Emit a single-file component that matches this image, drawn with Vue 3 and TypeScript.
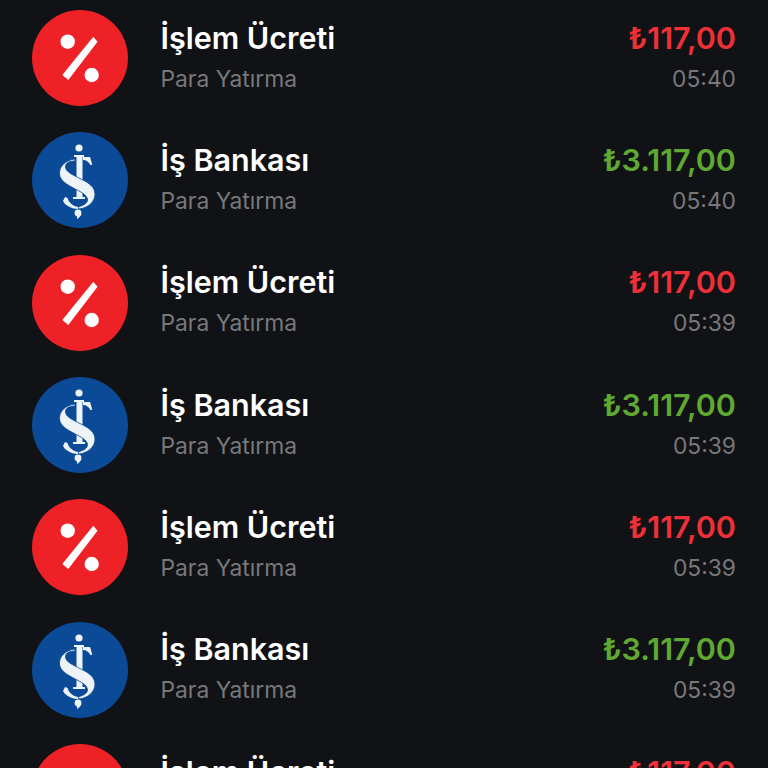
<template>
  <div class="screen">
    <div class="list">
      <div v-for="(tx, i) in transactions" :key="i" class="row">
        <div class="avatar" :class="tx.kind">
          <svg v-if="tx.kind === 'fee'" viewBox="0 0 96 96" class="icon">
            <circle cx="35.7" cy="31.7" r="7.2" fill="#fff" />
            <circle cx="59.7" cy="65" r="7.2" fill="#fff" />
            <path d="M61.3 26.7 L65.5 31.7 L36.3 70 L30.3 65 Z" fill="#fff" />
          </svg>
          <svg v-else viewBox="0 0 96 96" class="icon">
            <g fill="#eef3f8">
              <circle cx="47" cy="16" r="3.6" />
              <path d="M42 23 H52 V25 H50.5 V65 H53 V67 H41 V65 H44.5 V25 H42 Z" />
              <path d="M51 25 H58 C59 28 60 31 60 33 H58.4 C57 30 54.5 28 51 28 Z" />
              <path d="M43 27 C34 28 27 34 27.5 42 C28 50 38 54 47 59 C53 62 57 66 55 70 C53 73 49 74 46 75 L47 77 C56 76 63 70 63 62 C63 52 50 48 43 44 C37 41 33 38 33.5 34 C34 30 39 29 43 29 Z" stroke="#0b4a96" stroke-width="0.8" />
              <path d="M33 65 L35.5 66 C37 71 41 74 46 75 L46 77 C40 77 36 74 33 72 L31 69 Z" />
              <circle cx="46" cy="81" r="3.4" />
              <path d="M45 82 L49.4 81.5 C49 84 47 86 45 87 Z" />
            </g>
          </svg>
        </div>
        <div class="info">
          <div class="title">{{ tx.title }}</div>
          <div class="sub">Para Yatırma</div>
        </div>
        <div class="side">
          <div class="amount" :class="tx.kind">{{ tx.amount }}</div>
          <div class="time">{{ tx.time }}</div>
        </div>
      </div>
    </div>
  </div>
</template>

<script setup lang="ts">
interface Tx {
  kind: 'fee' | 'bank'
  title: string
  amount: string
  time: string
}

const fee = (time: string): Tx => ({ kind: 'fee', title: 'İşlem Ücreti', amount: '₺117,00', time })
const bank = (time: string): Tx => ({ kind: 'bank', title: 'İş Bankası', amount: '₺3.117,00', time })

const transactions: Tx[] = [
  fee('05:40'),
  bank('05:40'),
  fee('05:39'),
  bank('05:39'),
  fee('05:39'),
  bank('05:39'),
  fee('05:39'),
]
</script>

<style>
html, body { background: #111215; }
</style>

<style scoped>
.screen { width: 768px; height: 768px; overflow: hidden; background: #111215; font-family: Inter, "Liberation Sans", sans-serif; }
.list { display: flex; flex-direction: column; margin-top: -3px; padding: 0 32px; }
.row { display: flex; align-items: center; height: 122.33px; flex-shrink: 0; }
.avatar { width: 96px; height: 96px; border-radius: 50%; flex-shrink: 0; margin-right: 32.5px; }
.avatar.fee { background: #ee2127; }
.avatar.bank { background: #0b4a96; }
.icon { display: block; width: 96px; height: 96px; }
.info { flex: 1; display: flex; flex-direction: column; gap: 9px; padding-bottom: 4px; }
.title { font-size: 30.5px; line-height: 36px; font-weight: 600; color: #fff; }
.sub { font-size: 22.8px; line-height: 28px; color: #77787c; }
.side { display: flex; flex-direction: column; align-items: flex-end; gap: 9px; padding-bottom: 4px; }
.amount { font-size: 30.5px; line-height: 36px; font-weight: 600; }
.amount.fee { color: #ee3038; }
.amount.bank { color: #5fa831; }
.time { font-size: 22.8px; line-height: 28px; color: #77787c; }
</style>
